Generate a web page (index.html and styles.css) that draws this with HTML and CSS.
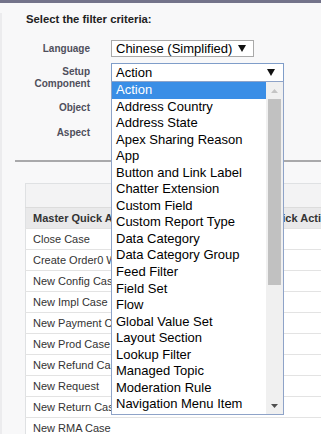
FILE: index.html
```html
<!DOCTYPE html>
<html>
<head>
<meta charset="utf-8">
<link rel="stylesheet" href="styles.css">
</head>
<body>
<div class="topbar"></div>
<div class="page">
  <div class="title">Select the filter criteria:</div>
  <div class="form">
    <div class="row r-lang">
      <div class="label">Language</div>
      <div class="select sel-lang"><span>Chinese (Simplified)</span><svg class="arrow" width="8" height="7" viewBox="0 0 8 7"><path d="M0 0H8L4 7Z" fill="#111"/></svg></div>
    </div>
    <div class="row r-setup">
      <div class="label">Setup<br>Component</div>
      <div class="selwrap">
        <div class="select sel-setup"><span>Action</span><svg class="arrow" width="8" height="7" viewBox="0 0 8 7"><path d="M0 0H8L4 7Z" fill="#111"/></svg></div>
        <div class="listbox">
          <ul class="options">
            <li class="selected">Action</li>
            <li>Address Country</li>
            <li>Address State</li>
            <li>Apex Sharing Reason</li>
            <li>App</li>
            <li>Button and Link Label</li>
            <li>Chatter Extension</li>
            <li>Custom Field</li>
            <li>Custom Report Type</li>
            <li>Data Category</li>
            <li>Data Category Group</li>
            <li>Feed Filter</li>
            <li>Field Set</li>
            <li>Flow</li>
            <li>Global Value Set</li>
            <li>Layout Section</li>
            <li>Lookup Filter</li>
            <li>Managed Topic</li>
            <li>Moderation Rule</li>
            <li>Navigation Menu Item</li>
          </ul>
          <div class="scrollbar">
            <div class="sb-btn"><svg width="7" height="4" viewBox="0 0 7 4"><path d="M0 4L3.5 0L7 4Z" fill="#c4c4c4"/></svg></div>
            <div class="sb-track"><div class="sb-thumb"></div></div>
            <div class="sb-btn"><svg width="7" height="4" viewBox="0 0 7 4"><path d="M0 0H7L3.5 4Z" fill="#505050"/></svg></div>
          </div>
        </div>
      </div>
    </div>
    <div class="row r-obj"><div class="label">Object</div></div>
    <div class="row r-aspect"><div class="label">Aspect</div></div>
  </div>
  <div class="sep"></div>
  <table class="grid">
    <tr class="blank"><td></td><td></td></tr>
    <tr class="head"><th>Master Quick Action Label</th><th>Quick Action Label Translation</th></tr>
    <tr><td>Close Case</td><td></td></tr>
    <tr><td>Create Order0 Workflow</td><td></td></tr>
    <tr><td>New Config Case</td><td></td></tr>
    <tr><td>New Impl Case</td><td></td></tr>
    <tr><td>New Payment Case</td><td></td></tr>
    <tr><td>New Prod Case</td><td></td></tr>
    <tr><td>New Refund Case</td><td></td></tr>
    <tr><td>New Request</td><td></td></tr>
    <tr><td>New Return Case</td><td></td></tr>
    <tr><td>New RMA Case</td><td></td></tr>
  </table>
</div>
</body>
</html>
```
FILE: styles.css
```css
html, body {
  margin: 0;
  padding: 0;
  overflow: hidden;
}
body {
  background: #f8f8f9;
  font-family: "Liberation Sans", Arial, sans-serif;
  color: #222;
  width: 321px;
  height: 434px;
}
.topbar {
  height: 3px;
  background: #73738a;
}
.page {
  border-left: 2px solid #ececee;
}
.title {
  margin: 10px 0 0 24px;
  font-size: 11.3px;
  line-height: 12px;
  font-weight: bold;
  color: #222;
}
.form {
  margin-top: 15px;
  padding-left: 24px;
}
.row {
  display: flex;
  gap: 21px;
}
.label {
  width: 64px;
  flex: none;
  text-align: right;
  font-size: 10px;
  font-weight: bold;
  color: #4f4f5c;
  line-height: 12px;
}
.r-lang {
  height: 17px;
  align-items: center;
}
.r-setup {
  margin-top: 6px;
  height: 27px;
  align-items: flex-start;
}
.r-setup .label {
  margin-top: 3px;
}
.r-obj {
  margin-top: 8px;
  height: 20px;
  align-items: center;
}
.r-aspect {
  margin-top: 5px;
  height: 20px;
  align-items: center;
}
.select {
  box-sizing: border-box;
  display: flex;
  align-items: center;
  justify-content: space-between;
  background: #fff;
  font-size: 13px;
  color: #000;
  padding: 0 7px 0 4px;
}
.sel-lang {
  width: 143px;
  height: 17px;
  border: 1px solid #a9a9a9;
}
.sel-setup {
  width: 173px;
  height: 19px;
  border: 1px solid #7f9dc9;
  padding-right: 8px;
}
.selwrap {
  position: relative;
}
.listbox {
  position: absolute;
  left: 0;
  top: 18px;
  width: 173px;
  height: 334px;
  box-sizing: border-box;
  border: 1px solid #8ea3c8;
  background: #fff;
  display: flex;
  z-index: 5;
}
.options {
  list-style: none;
  margin: 0;
  padding: 0;
  flex: 1;
}
.options li {
  height: 16.55px;
  line-height: 16.55px;
  font-size: 13px;
  padding-left: 4px;
  color: #000;
  white-space: nowrap;
  overflow: hidden;
}
.options li.selected {
  background: #3a8ee6;
  color: #fff;
}
.scrollbar {
  width: 17px;
  flex: none;
  background: #f0f0f0;
  display: flex;
  flex-direction: column;
}
.sb-btn {
  height: 17px;
  display: flex;
  align-items: center;
  justify-content: center;
}
.sb-track {
  flex: 1;
  padding: 0 2px;
}
.sb-thumb {
  height: 186px;
  background: #c1c1c1;
}
.sep {
  margin: 17px 0 0 13px;
  height: 2px;
  background: #a9a9ab;
}
.grid {
  margin: 21px 0 0 23px;
  border-collapse: collapse;
  width: 440px;
  table-layout: fixed;
  background: #fff;
  border: 1px solid #dfe1e3;
}
.grid td, .grid th {
  height: 20px;
  padding: 0 7px;
  text-align: left;
  font-size: 11px;
  color: #333;
  white-space: nowrap;
  overflow: hidden;
  border-bottom: 1px solid #e3e3e3;
}
.grid td:first-child, .grid th:first-child {
  width: 220px;
}
.grid .blank td {
  height: 23px;
  background: #f3f3f4;
  border-bottom: 1px solid #dcdcdc;
}
.grid .head th {
  background: #e9e9ea;
  font-weight: bold;
  color: #333;
}
```
